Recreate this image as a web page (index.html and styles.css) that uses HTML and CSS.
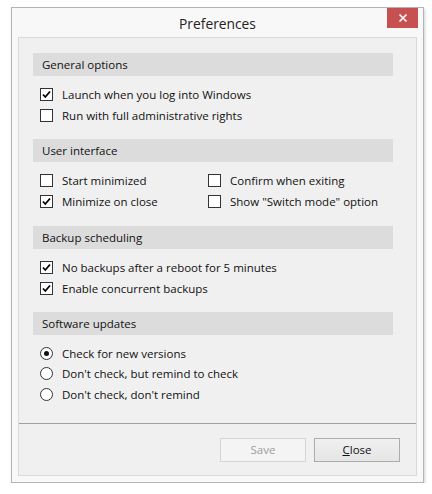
FILE: index.html
```html
<!DOCTYPE html>
<html>
<head>
<meta charset="utf-8">
<link rel="stylesheet" href="styles.css">
</head>
<body>
<div class="window">
  <div class="titlebar">
    <span class="title">Preferences</span>
    <div class="close"><svg width="10" height="10" viewBox="0 0 10 10"><path d="M1.5 1.5 L8.5 8.5 M8.5 1.5 L1.5 8.5" stroke="#fff" stroke-width="1.6"/></svg></div>
  </div>
  <div class="panel">
    <div class="content">
      <div class="section">
        <div class="head">General options</div>
        <div class="rows">
          <label class="opt"><span class="cb checked"><svg width="11" height="11" viewBox="0 0 11 11"><path d="M2 5.5 L4.3 8 L9 2.5" fill="none" stroke="#000" stroke-width="1.8"/></svg></span>Launch when you log into Windows</label>
          <label class="opt"><span class="cb"></span>Run with full administrative rights</label>
        </div>
      </div>
      <div class="section">
        <div class="head">User interface</div>
        <div class="rows grid2">
          <label class="opt"><span class="cb"></span>Start minimized</label>
          <label class="opt"><span class="cb"></span>Confirm when exiting</label>
          <label class="opt"><span class="cb checked"><svg width="11" height="11" viewBox="0 0 11 11"><path d="M2 5.5 L4.3 8 L9 2.5" fill="none" stroke="#000" stroke-width="1.8"/></svg></span>Minimize on close</label>
          <label class="opt"><span class="cb"></span>Show "Switch mode" option</label>
        </div>
      </div>
      <div class="section">
        <div class="head">Backup scheduling</div>
        <div class="rows">
          <label class="opt"><span class="cb checked"><svg width="11" height="11" viewBox="0 0 11 11"><path d="M2 5.5 L4.3 8 L9 2.5" fill="none" stroke="#000" stroke-width="1.8"/></svg></span>No backups after a reboot for 5 minutes</label>
          <label class="opt"><span class="cb checked"><svg width="11" height="11" viewBox="0 0 11 11"><path d="M2 5.5 L4.3 8 L9 2.5" fill="none" stroke="#000" stroke-width="1.8"/></svg></span>Enable concurrent backups</label>
        </div>
      </div>
      <div class="section">
        <div class="head">Software updates</div>
        <div class="rows radios">
          <label class="opt"><span class="rb on"></span>Check for new versions</label>
          <label class="opt"><span class="rb"></span>Don't check, but remind to check</label>
          <label class="opt"><span class="rb"></span>Don't check, don't remind</label>
        </div>
      </div>
    </div>
    <div class="footer">
      <div class="btn disabled">Save</div>
      <div class="btn"><u>C</u>lose</div>
    </div>
  </div>
</div>
</body>
</html>
```
FILE: styles.css
```css
html, body {
  margin: 0;
  padding: 0;
  background: #ffffff;
}
body {
  font-family: "Open Sans", "Noto Sans", sans-serif;
  font-size: 11.5px;
  color: #000;
}
.window {
  margin: 7px 0 0 11px;
  border: 1px solid #b4b4b4;
  background: #f8f8f8;
  box-shadow: 1px 2px 3px rgba(0,0,0,0.18);
  display: flex;
  flex-direction: column;
  padding: 0 6px 6px 6px;
  box-sizing: content-box;
  width: 399px;
  height: 468px;
}
.titlebar {
  height: 29px;
  position: relative;
  display: flex;
  align-items: center;
  justify-content: center;
}
.title {
  font-size: 13.8px;
  color: #222;
  margin-top: 1px;
}
.close {
  position: absolute;
  right: -1px;
  top: 0;
  width: 31px;
  height: 20px;
  background: #c75050;
  display: flex;
  align-items: center;
  justify-content: center;
}
.panel {
  flex: 1;
  border: 1px solid #dadada;
  background: #f0f0f0;
  display: flex;
  flex-direction: column;
}
.content {
  flex: 1;
  padding: 15px 23px 0 14px;
}
.section {
  margin-bottom: 13.3px;
}
.head {
  height: 23px;
  background: #dcdcdc;
  padding-left: 9px;
  display: flex;
  align-items: center;
  color: #111;
}
.rows {
  padding-top: 8px;
  padding-left: 7px;
}
.grid2 {
  display: grid;
  grid-template-columns: 168px 1fr;
}
.opt {
  height: 21px;
  display: flex;
  align-items: center;
  color: #111;
}
.radios .opt {
  height: 20.5px;
}
.cb {
  width: 11px;
  height: 11px;
  border: 1px solid #333;
  background: #fff;
  margin-right: 9px;
  display: flex;
  align-items: center;
  justify-content: center;
  flex: none;
}
.rb {
  width: 11px;
  height: 11px;
  border: 1px solid #333;
  border-radius: 50%;
  background: #fff;
  margin-right: 9px;
  flex: none;
  position: relative;
}
.rb.on::after {
  content: "";
  position: absolute;
  left: 3px;
  top: 3px;
  width: 5px;
  height: 5px;
  border-radius: 50%;
  background: #111;
}
.footer {
  height: 51px;
  border-top: 1px solid #a0a0a0;
  display: flex;
  align-items: center;
  justify-content: flex-end;
  gap: 8px;
  padding-right: 16px;
}
.btn {
  width: 84px;
  height: 22px;
  border: 1px solid #acacac;
  background: linear-gradient(#f0f0f0, #e5e5e5);
  display: flex;
  align-items: center;
  justify-content: center;
  color: #111;
}
.btn.disabled {
  border-color: #d5d5d5;
  background: #f4f4f4;
  color: #9c9c9c;
}
```
